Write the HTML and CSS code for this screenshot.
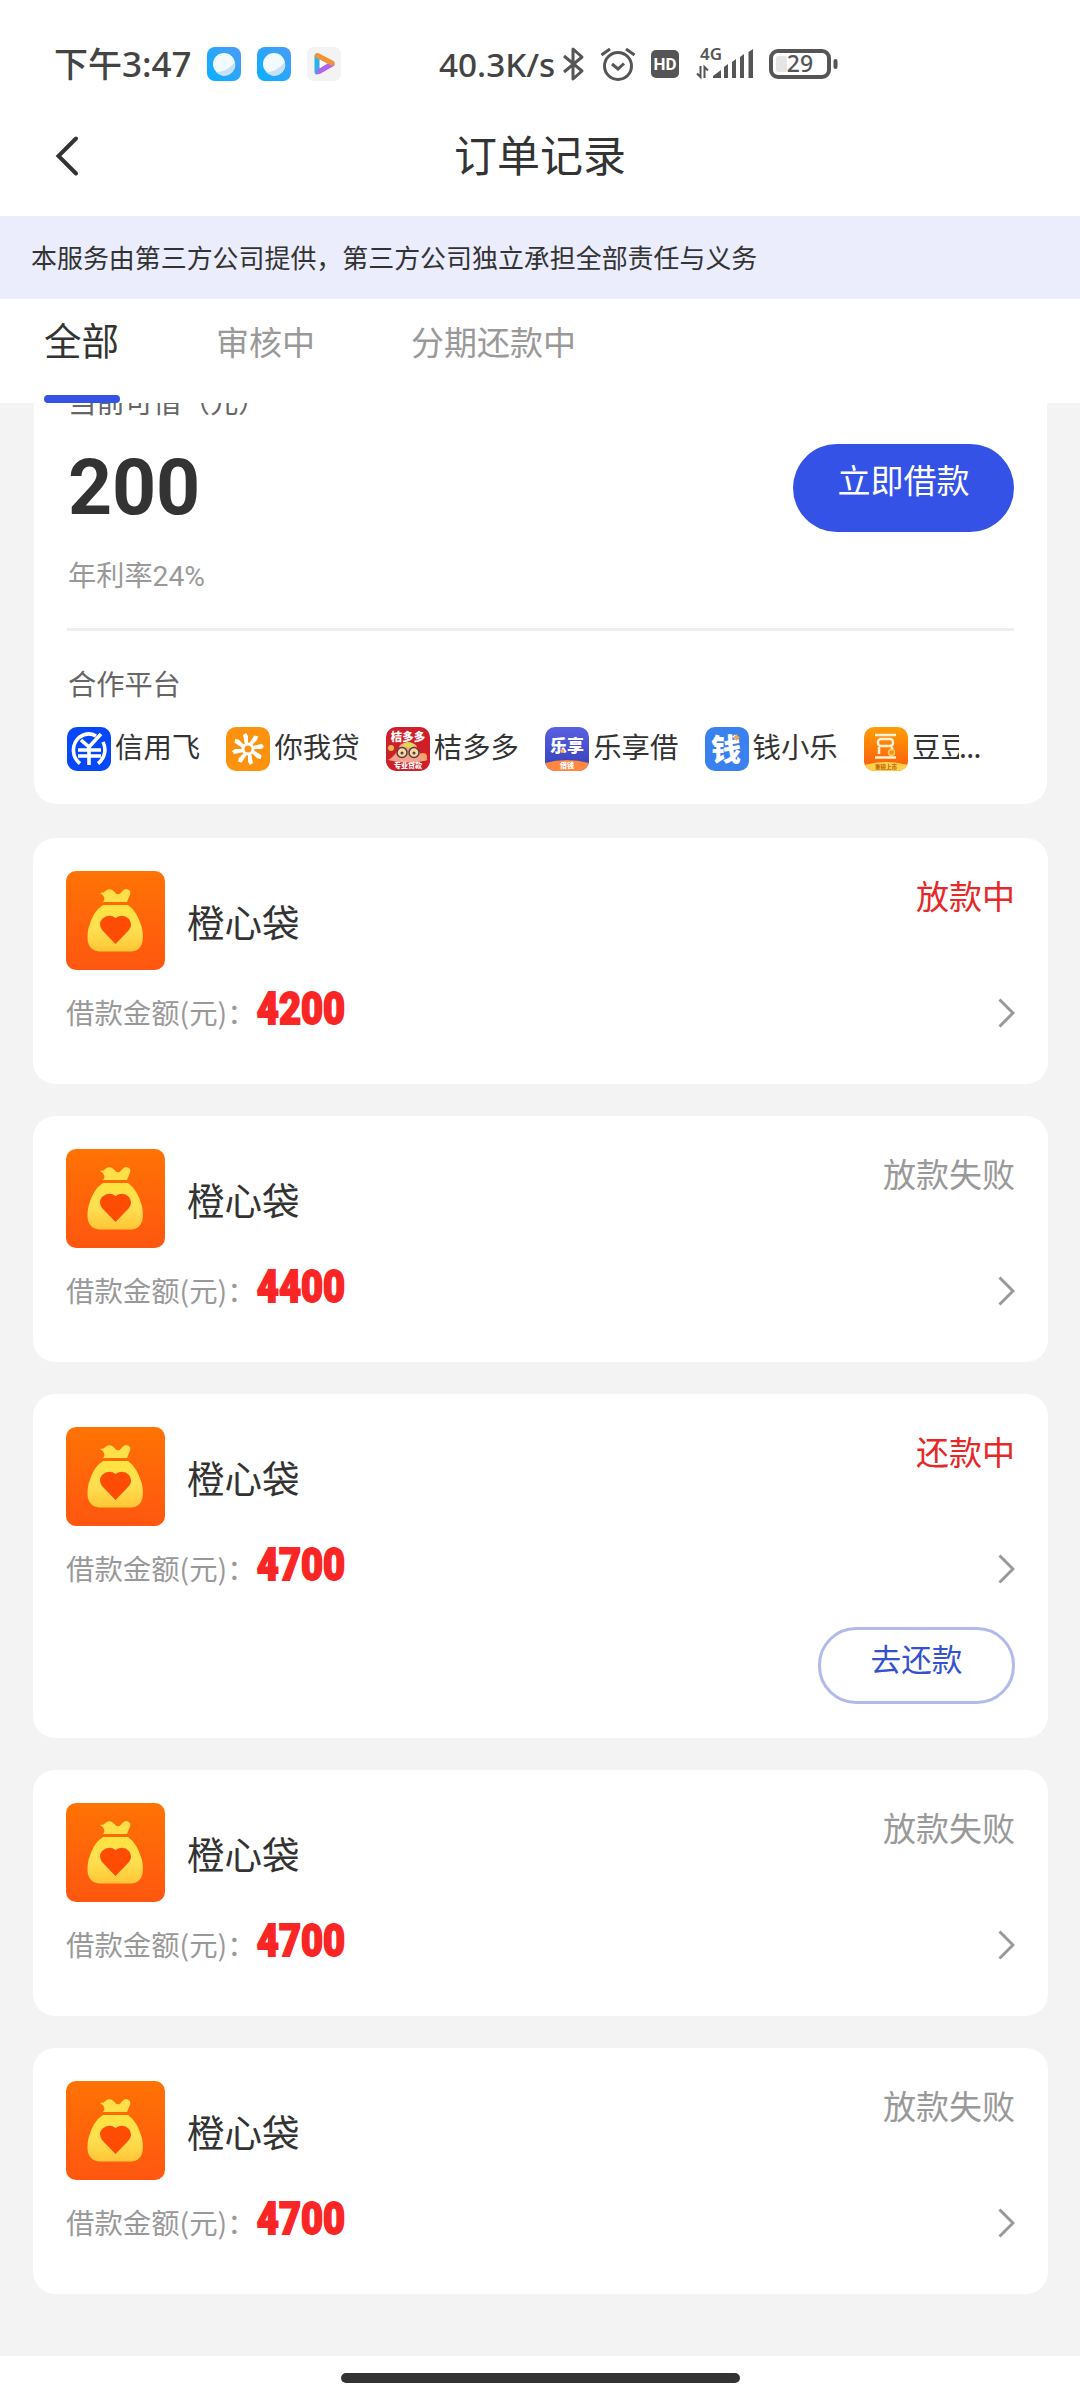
FILE: index.html
```html
<!DOCTYPE html>
<html lang="zh-CN">
<head>
<meta charset="utf-8">
<title>订单记录</title>
<link rel="stylesheet" href="styles.css">
</head>
<body>
<svg class="defs" width="0" height="0" aria-hidden="true">
  <defs>
    <linearGradient id="bagBg" x1="0" y1="0" x2="0" y2="1"><stop offset="0" stop-color="#ff7304"/><stop offset="1" stop-color="#ff5610"/></linearGradient>
    <linearGradient id="bagGold" x1="0" y1="0" x2="0" y2="1"><stop offset="0" stop-color="#fee33f"/><stop offset=".5" stop-color="#ffe052"/><stop offset="1" stop-color="#ffc636"/></linearGradient>
    <linearGradient id="blueApp" x1="1" y1="0" x2="0" y2="1"><stop offset="0" stop-color="#4a9cf4"/><stop offset="1" stop-color="#08b0ff"/></linearGradient>
    <linearGradient id="lexiang" x1="0" y1="0" x2="0" y2="1"><stop offset="0" stop-color="#5a60e0"/><stop offset="1" stop-color="#3540b8"/></linearGradient>
    <linearGradient id="doudou" x1="0" y1="0" x2="0" y2="1"><stop offset="0" stop-color="#ff9d05"/><stop offset="1" stop-color="#fb5a0c"/></linearGradient>
    <symbol id="bag" viewBox="0 0 99 99">
      <rect width="99" height="99" rx="10" fill="url(#bagBg)"/>
      <path d="M34 22Q38 22 40 19.500Q44 16.500 48 20.500Q52 26 56 20.500Q60 16 64 20Q65 22 63 26L61 31H37Q41 26 34 22Z" fill="#ffe048"/>
      <path d="M37 34H62Q71 40 76 57Q80 79 66 80.500H33Q18 79 22.500 57Q27 40 37 34Z" fill="url(#bagGold)"/>
      <path d="M49.500 73L36 59Q32 53 36 48Q43 42 49.500 47Q57 42 63 48Q67 54 63 59Z" fill="#ff4c05"/>
    </symbol>
    <symbol id="browser" viewBox="0 0 34 34">
      <rect width="34" height="34" rx="8" fill="url(#blueApp)"/>
      <circle cx="17" cy="17" r="11" fill="#f1faff"/>
      <path d="M28 15A11 11 0 0 1 9 25Q20 25 28 15Z" fill="#c9dff5"/>
    </symbol>
    <symbol id="chev" viewBox="0 0 17 30"><path d="M1.500 1.500L15 15L1.500 28.500" fill="none" stroke="#999" stroke-width="3"/></symbol>
  </defs>
</svg>

<header class="statusbar">
  <span class="clock">下午<span class="clock-num">3:47</span></span>
  <div class="notif">
    <svg width="34" height="34"><use href="#browser"/></svg>
    <svg width="34" height="34"><use href="#browser"/></svg>
    <svg width="34" height="34" viewBox="0 0 34 34">
      <rect width="34" height="34" rx="7" fill="#f4f3f4"/>
      <path d="M10 9V25" stroke="#2fb0e8" stroke-width="5" stroke-linecap="round"/>
      <path d="M12 24.500L25 17" stroke="#b264f0" stroke-width="5" stroke-linecap="round"/>
      <path d="M10.500 8.500L25 16" stroke="#f39336" stroke-width="5" stroke-linecap="round"/>
      <path d="M13 13V21L19 17Z" fill="#fff"/>
    </svg>
  </div>
  <span class="speed">40.3K/s</span>
  <svg class="bt" width="22" height="34" viewBox="0 0 22 34"><path d="M2 9L20 24L11 32V2L20 10L2 25" fill="none" stroke="#555" stroke-width="3" stroke-linejoin="round"/></svg>
  <svg class="alarm" width="36" height="34" viewBox="0 0 36 34"><g fill="none" stroke="#555" stroke-width="3"><circle cx="18" cy="19" r="13.500"/><path d="M12 17L18 22L24 16.500M1.500 8L10 2M26 2L34.500 8"/></g></svg>
  <svg class="hd" width="28" height="28" viewBox="0 0 28 28"><rect width="28" height="28" rx="5" fill="#555"/><text x="14" y="20" text-anchor="middle" textLength="23" lengthAdjust="spacingAndGlyphs" class="hd-text">HD</text></svg>
  <svg class="signal" width="60" height="34" viewBox="0 0 60 34">
    <text x="4" y="12.500" class="g4" textLength="22" lengthAdjust="spacingAndGlyphs">4G</text>
    <path d="M4.500 19V30L1 26.500M8.500 31V20L12 23.500" fill="none" stroke="#555" stroke-width="2"/>
    <path d="M17 31V29L25 23V31ZM28 31V20L32 17V31ZM36 31V15L40 12V31ZM44 31V10L48 7V31ZM52.500 31V5L57 2V31Z" fill="#555"/>
  </svg>
  <svg class="battery" width="69" height="30" viewBox="0 0 69 30">
    <rect x="2" y="2" width="58" height="26" rx="7" fill="#fff" stroke="#555" stroke-width="4"/>
    <rect x="7" y="7" width="11" height="16" rx="2" fill="#e5e5e5"/>
    <rect x="64.500" y="10" width="4" height="10" rx="2" fill="#555"/>
    <text x="31" y="23" text-anchor="middle" class="bat-text">29</text>
  </svg>
</header>

<div class="titlebar">
  <svg class="back" width="24" height="42" viewBox="0 0 24 42"><path d="M21 3.500L3.500 21L21 38.500" fill="none" stroke="#333" stroke-width="4" stroke-linecap="round"/></svg>
  <h1>订单记录</h1>
</div>

<div class="notice">本服务由第三方公司提供，第三方公司独立承担全部责任与义务</div>

<nav class="tabs">
  <a class="tab active">全部</a>
  <a class="tab">审核中</a>
  <a class="tab">分期还款中</a>
</nav>

<main class="list">
  <section class="card credit">
    <p class="quota-label">当前可借（元）</p>
    <div class="quota-row"><strong>200</strong><button class="borrow">立即借款</button></div>
    <p class="rate">年利率24%</p>
    <hr>
    <p class="partner-title">合作平台</p>
    <div class="partners">
      <span class="partner"><svg width="44" height="44" viewBox="0 0 44 44"><rect width="44" height="44" rx="10" fill="#0648f8"/><path d="M13 36.500A17 17 0 0 1 12 10.500Q21 4 29 9M36 15A17 17 0 0 1 31 36.500" fill="none" stroke="#fff" stroke-width="3.600"/><path d="M14 13L22 20L34 7M11 23H34M11 29H34M22 20V38" fill="none" stroke="#fff" stroke-width="3.600"/></svg>信用飞</span>
      <span class="partner"><svg width="44" height="44" viewBox="0 0 44 44"><rect width="44" height="44" rx="10" fill="#fd920f"/><g fill="#fff"><path id="ray" d="M19 18L17 8L20 6L22 9V17Z"/><use href="#ray" transform="rotate(45 22 22)"/><use href="#ray" transform="rotate(90 22 22)"/><use href="#ray" transform="rotate(135 22 22)"/><use href="#ray" transform="rotate(180 22 22)"/><use href="#ray" transform="rotate(225 22 22)"/><use href="#ray" transform="rotate(270 22 22)"/><use href="#ray" transform="rotate(315 22 22)"/></g><circle cx="22" cy="22" r="5" fill="none" stroke="#fff" stroke-width="3"/></svg>你我贷</span>
      <span class="partner"><svg width="44" height="44" viewBox="0 0 44 44"><rect width="44" height="44" rx="10" fill="#cf2029"/><circle cx="5" cy="21" r="3" fill="#f5b452"/><circle cx="37" cy="30" r="4" fill="#f5a552"/><path d="M2 33Q10 29 14 18Q22 12 30 18Q34 30 42 33Q22 38 2 33Z" fill="#f2a28a"/><path d="M16 19Q22 12 29 18L25 21Z" fill="#d6df52"/><g fill="#fbd7a8" stroke="#5d3a3c" stroke-width="1.500"><circle cx="16" cy="25.500" r="5"/><circle cx="28" cy="25.500" r="5"/></g><circle cx="16" cy="26" r="1.500" fill="#443"/><circle cx="28" cy="26" r="1.500" fill="#443"/><text x="22" y="14" class="ic-text jdd">桔多多</text><text x="22" y="41" class="ic-text tiny">专业贷款</text></svg>桔多多</span>
      <span class="partner"><svg width="44" height="44" viewBox="0 0 44 44"><clipPath id="r"><rect width="44" height="44" rx="10"/></clipPath><g clip-path="url(#r)"><rect width="44" height="44" fill="url(#lexiang)"/><path d="M0 36Q22 30 44 36V44H0Z" fill="#ff8740"/></g><text x="22" y="25" class="ic-text lx">乐享</text><text x="22" y="41" class="ic-text tiny">借钱</text><circle cx="17.500" cy="24" r="2" fill="#ffb05a"/></svg>乐享借</span>
      <span class="partner"><svg width="44" height="44" viewBox="0 0 44 44"><rect width="44" height="44" rx="10" fill="#3a80ee"/><text x="21" y="33" class="ic-text qian">钱</text><path d="M31.500 7L33 9L35 10.500L33 12L31.500 14L30 12L28 10.500L30 9Z" fill="#f0a84e"/></svg>钱小乐</span>
      <span class="partner"><svg width="44" height="44" viewBox="0 0 44 44"><g clip-path="url(#r)"><rect width="44" height="44" fill="url(#doudou)"/><path d="M0 38Q22 32 44 38V44H0Z" fill="#ffd04a"/></g><g fill="none" stroke="#fff0d8" stroke-width="2.500"><path d="M11 8H32M11 30.500H32M15 20V27M28 20V26"/><rect x="14" y="12" width="15" height="7" rx="3"/></g><circle cx="27.500" cy="25.500" r="3" fill="#ff8a20" stroke="#ffd25a" stroke-width="1.500"/><text x="22" y="42" class="ic-text tiny gold">重磅上市</text></svg><span class="cut">豆豆</span><span class="dots">...</span></span>
    </div>
  </section>

  <section class="card">
    <div class="top"><svg width="99" height="99"><use href="#bag"/></svg><h2>橙心袋</h2><span class="state hot">放款中</span></div>
    <div class="amount"><span>借款金额(元)：</span><b>4200</b><svg width="17" height="30"><use href="#chev"/></svg></div>
  </section>
  <section class="card">
    <div class="top"><svg width="99" height="99"><use href="#bag"/></svg><h2>橙心袋</h2><span class="state">放款失败</span></div>
    <div class="amount"><span>借款金额(元)：</span><b>4400</b><svg width="17" height="30"><use href="#chev"/></svg></div>
  </section>
  <section class="card">
    <div class="top"><svg width="99" height="99"><use href="#bag"/></svg><h2>橙心袋</h2><span class="state hot">还款中</span></div>
    <div class="amount"><span>借款金额(元)：</span><b>4700</b><svg width="17" height="30"><use href="#chev"/></svg></div>
    <button class="repay">去还款</button>
  </section>
  <section class="card">
    <div class="top"><svg width="99" height="99"><use href="#bag"/></svg><h2>橙心袋</h2><span class="state">放款失败</span></div>
    <div class="amount"><span>借款金额(元)：</span><b>4700</b><svg width="17" height="30"><use href="#chev"/></svg></div>
  </section>
  <section class="card">
    <div class="top"><svg width="99" height="99"><use href="#bag"/></svg><h2>橙心袋</h2><span class="state">放款失败</span></div>
    <div class="amount"><span>借款金额(元)：</span><b>4700</b><svg width="17" height="30"><use href="#chev"/></svg></div>
  </section>
</main>
<footer class="homebar"><i></i></footer>
</body>
</html>
```

FILE: styles.css
```css
* { box-sizing: border-box; margin: 0; padding: 0; }
body {
  width: 1080px;
  height: 2400px;
  overflow: hidden;
  display: flex;
  flex-direction: column;
  background: #fff;
  color: #333;
  font-family: "Noto Sans CJK SC", sans-serif;
}
svg { display: block; flex: none; overflow: visible; }
.defs { position: absolute; }
button { font: inherit; border: 0; }

.statusbar {
  height: 128px;
  padding-left: 54px;
  display: flex;
  align-items: center;
  color: #444;
}
.clock { width: 153px; margin-top: -2px; font-size: 34px; font-weight: 500; white-space: nowrap; line-height: 40px; }
.clock-num { font-family: "Noto Sans", sans-serif; font-size: 35px; }
.notif { display: flex; gap: 16px; width: 232px; }
.speed { width: 123px; font: 500 33.3px/40px "Noto Sans", sans-serif; white-space: nowrap; }
.alarm { margin-left: 16px; }
.hd { margin-left: 15px; }
.hd-text { font: 700 17px Roboto, sans-serif; fill: #fff; }
.signal { margin-left: 17px; }
.g4 { font: 600 16px "Noto Sans", sans-serif; fill: #555; }
.battery { margin-left: 13px; }
.bat-text { font: 500 23px "Noto Sans", sans-serif; fill: #555; }

.titlebar {
  height: 88px;
  padding: 0 55px;
  display: grid;
  grid-template-columns: 24px 1fr 24px;
}
.back { margin-top: 7px; }
.titlebar h1 { text-align: center; font-size: 43px; font-weight: 400; line-height: 50px; }

.notice {
  height: 83px;
  padding-left: 31px;
  background: #ebedfd;
  font-size: 25.95px;
  line-height: 81px;
}

.tabs {
  height: 104px;
  padding-left: 44px;
  display: flex;
  background: #fff;
}
.tab { margin-right: 96px; font-size: 33px; line-height: 84px; color: #999; }
.tab.active {
  width: 76px;
  font-size: 37.5px;
  line-height: 80px;
  color: #333;
}
.tab.active::after {
  content: "";
  display: block;
  height: 8px;
  margin-top: 16px;
  border-radius: 4px;
  background: #3452e6;
}

.list {
  height: 1953px;
  padding: 0 32px 0 33px;
  overflow: hidden;
  display: flex;
  flex-direction: column;
  gap: 32px;
  background: #f3f3f3;
}
.card { flex: none; min-height: 246px; padding: 33px 33px 34px; border-radius: 22px; background: #fff; }

.credit { margin: -47px 1px 2px; height: 448px; padding: 25px 33px 33px; }
.quota-label { padding-left: 1px; font-size: 28.4px; line-height: 40px; color: #666; }
.quota-row { margin-top: 23px; height: 88px; display: flex; justify-content: space-between; align-items: center; }
.quota-row strong { padding-left: 1px; font: 700 77px/80px Roboto, sans-serif; letter-spacing: -0.2px; }
.borrow {
  width: 221px;
  height: 88px;
  padding-bottom: 18px;
  border-radius: 44px;
  background: #3452e6;
  color: #fff;
  font-size: 33px;
  line-height: 69px;
}
.rate { margin-top: 25px; padding-left: 1px; font-family: Roboto, "Noto Sans CJK SC", sans-serif; font-size: 28.2px; line-height: 40px; color: #999; }
hr { margin-top: 31px; height: 3px; border: 0; background: #eee; }
.partner-title { margin-top: 33px; padding-left: 1px; font-size: 28.2px; line-height: 38px; color: #666; }
.partners { margin-top: 25px; display: flex; }
.partner { width: 159.4px; flex: none; display: flex; font-size: 28.4px; line-height: 38px; white-space: nowrap; }
.partner svg { margin-right: 4px; }
.cut { width: 47px; overflow: hidden; }
.dots { letter-spacing: -0.6px; }
.ic-text { font-weight: 900; fill: #fff; text-anchor: middle; }
.jdd { font-size: 11.5px; }
.tiny { font-size: 7px; }
.lx { font-size: 17px; }
.qian { font-size: 30px; }
.gold { font-size: 5.5px; fill: #c46a10; }

.top { display: flex; align-items: center; height: 99px; }
.top h2 { flex: 1; margin-left: 22px; font-size: 37.5px; font-weight: 400; }
.state { align-self: flex-start; font-size: 33px; line-height: 48px; color: #999; }
.hot { color: #e62828; }
.amount { margin-top: 16px; height: 50px; display: flex; align-items: center; }
.amount span { font-size: 28.4px; color: #999; }
.amount b {
  flex: 1;
  margin-bottom: 5px;
  padding-left: 1px;
  font: 900 44px/50px Roboto, sans-serif;
  color: #fa2626;
  -webkit-text-stroke: 1.8px #fa2626;
  transform: scaleX(.865);
  transform-origin: 0 50%;
}
.amount svg { margin-top: 3px; }
.repay {
  display: block;
  width: 197px;
  height: 77px;
  margin: 35px 0 0 auto;
  padding-bottom: 14px;
  border: 3px solid #b2baec;
  border-radius: 38px;
  background: #fff;
  color: #3452d0;
  font-size: 30.6px;
  line-height: 57px;
}

.homebar { height: 44px; padding-top: 17px; }
.homebar i { display: block; width: 399px; height: 10px; margin: 0 auto; border-radius: 5px; background: #333; }
```
